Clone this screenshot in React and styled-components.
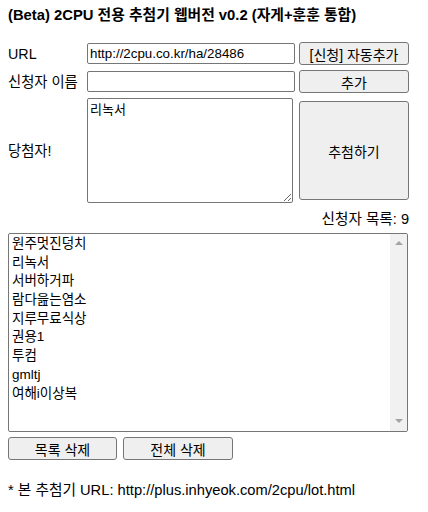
import React from "react";
import styled, { createGlobalStyle } from "styled-components";

const GlobalStyle = createGlobalStyle`
  html, body { margin: 0; padding: 0; background: #fff; }
  body {
    font-family: "Liberation Sans", "Noto Sans CJK KR", sans-serif;
    color: #000;
  }
`;

const Page = styled.div`
  width: 428px;
  padding: 7px 8px 8px 8px;
  box-sizing: border-box;
`;

const Title = styled.h1`
  margin: 0;
  font-size: 14.8px;
  line-height: 17px;
  font-weight: bold;
  white-space: nowrap;
`;

const FormGrid = styled.div`
  margin-top: 18px;
  display: grid;
  grid-template-columns: 75px 208px 110px;
  grid-template-rows: 23px 23px 105px;
  column-gap: 4px;
  row-gap: 5px;
  align-items: center;
`;

const Label = styled.label`
  font-size: 14.3px;
  line-height: 18px;
  white-space: nowrap;
`;

const TextInput = styled.input`
  box-sizing: border-box;
  width: 208px;
  height: 21px;
  margin: 0;
  padding: 1px 2px;
  border: 1px solid #767676;
  border-radius: 2px;
  font-family: "Liberation Sans", "Noto Sans CJK KR", sans-serif;
  font-size: 13.33px;
  color: #000;
  background: #fff;
  outline: none;
`;

const Winner = styled.textarea`
  box-sizing: border-box;
  width: 206px;
  height: 105px;
  margin: 0;
  padding: 2px;
  border: 1px solid #767676;
  border-radius: 2px;
  font-family: "Noto Sans CJK KR", sans-serif;
  font-size: 13px;
  line-height: 16px;
  color: #000;
  background: #fff;
  outline: none;
`;

const Button = styled.button`
  box-sizing: border-box;
  width: ${(p) => p.$w || 110}px;
  height: ${(p) => p.$h || 23}px;
  margin: 0;
  padding: 0 2px;
  border: 1px solid #767676;
  border-radius: 3px;
  background: #efefef;
  font-family: "Liberation Sans", "Noto Sans CJK KR", sans-serif;
  font-size: 14px;
  color: #000;
  white-space: nowrap;
`;

const CountRow = styled.div`
  margin-top: 7px;
  width: 401px;
  text-align: right;
  font-size: 14.6px;
  line-height: 18px;
`;

const ListBox = styled.div`
  margin-top: 5px;
  box-sizing: border-box;
  width: 400px;
  height: 199px;
  border: 1px solid #767676;
  border-radius: 2px;
  display: flex;
  overflow: hidden;
`;

const Items = styled.ul`
  flex: 1;
  margin: 0;
  padding: 1px 0 0 3px;
  list-style: none;
  font-family: "Liberation Sans", "Noto Sans CJK KR", sans-serif;
  font-size: 13.5px;
`;

const Item = styled.li`
  height: 18.7px;
  line-height: 18.7px;
  white-space: nowrap;
`;

const ScrollTrack = styled.div`
  width: 17px;
  background: #f1f1f1;
  display: flex;
  flex-direction: column;
  justify-content: space-between;
  align-items: center;
  padding: 7px 0 8px;
  box-sizing: border-box;
`;

const Arrow = styled.div`
  width: 0;
  height: 0;
  border-left: 4px solid transparent;
  border-right: 4px solid transparent;
  ${(p) =>
    p.$down
      ? "border-top: 4px solid #a3a3a3;"
      : "border-bottom: 4px solid #a3a3a3;"}
`;

const ButtonRow = styled.div`
  margin-top: 5px;
  display: flex;
  gap: 6px;
`;

const Footer = styled.p`
  margin: 22px 0 0;
  font-size: 14.7px;
  line-height: 17px;
  white-space: nowrap;
`;

const names = [
  "원주멋진덩치",
  "리녹서",
  "서버하거파",
  "람다읊는염소",
  "지루무료식상",
  "권용1",
  "투컴",
  "gmltj",
  "여해i이상복",
];

export default function App() {
  return (
    <>
      <GlobalStyle />
      <Page>
        <Title>(Beta) 2CPU 전용 추첨기 웹버전 v0.2 (자게+훈훈 통합)</Title>
        <FormGrid>
          <Label>URL</Label>
          <TextInput defaultValue="http://2cpu.co.kr/ha/28486" />
          <Button>[신청] 자동추가</Button>

          <Label>신청자 이름</Label>
          <TextInput defaultValue="" />
          <Button>추가</Button>

          <Label>당첨자!</Label>
          <Winner defaultValue="리녹서" />
          <Button $h={99}>추첨하기</Button>
        </FormGrid>
        <CountRow>신청자 목록: {names.length}</CountRow>
        <ListBox>
          <Items>
            {names.map((n) => (
              <Item key={n}>{n}</Item>
            ))}
          </Items>
          <ScrollTrack>
            <Arrow />
            <Arrow $down />
          </ScrollTrack>
        </ListBox>
        <ButtonRow>
          <Button $w={109}>목록 삭제</Button>
          <Button $w={110}>전체 삭제</Button>
        </ButtonRow>
        <Footer>* 본 추첨기 URL: http://plus.inhyeok.com/2cpu/lot.html</Footer>
      </Page>
    </>
  );
}
